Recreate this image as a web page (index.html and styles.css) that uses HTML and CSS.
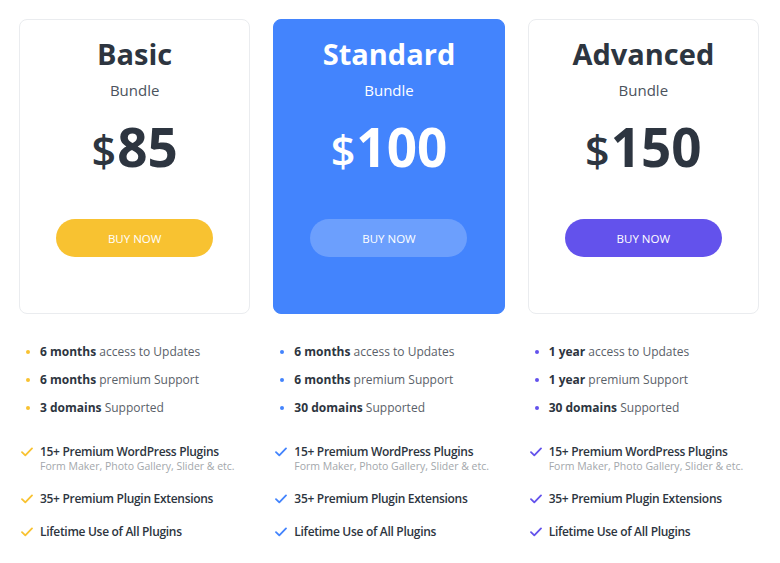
FILE: index.html
```html
<!DOCTYPE html>
<html>
<head>
<meta charset="utf-8">
<link rel="stylesheet" href="styles.css">
</head>
<body>
<div class="plans">
  <div class="plan basic">
    <div class="card">
      <h2 class="title">Basic</h2>
      <div class="sub">Bundle</div>
      <div class="price"><span class="cur">$</span>85</div>
      <a class="btn">BUY NOW</a>
    </div>
    <ul class="bullets">
      <li><b>6 months</b> access to Updates</li>
      <li><b>6 months</b> premium Support</li>
      <li><b>3 domains</b> Supported</li>
    </ul>
    <ul class="checks">
      <li><svg viewBox="0 0 12 10"><path d="M1 5.2 L4.3 8.4 L11 1.4"/></svg><div><div class="ft">15+ Premium WordPress Plugins</div><div class="fs">Form Maker, Photo Gallery, Slider &amp; etc.</div></div></li>
      <li><svg viewBox="0 0 12 10"><path d="M1 5.2 L4.3 8.4 L11 1.4"/></svg><div><div class="ft">35+ Premium Plugin Extensions</div></div></li>
      <li><svg viewBox="0 0 12 10"><path d="M1 5.2 L4.3 8.4 L11 1.4"/></svg><div><div class="ft">Lifetime Use of All Plugins</div></div></li>
    </ul>
  </div>
  <div class="plan standard">
    <div class="card">
      <h2 class="title">Standard</h2>
      <div class="sub">Bundle</div>
      <div class="price"><span class="cur">$</span>100</div>
      <a class="btn">BUY NOW</a>
    </div>
    <ul class="bullets">
      <li><b>6 months</b> access to Updates</li>
      <li><b>6 months</b> premium Support</li>
      <li><b>30 domains</b> Supported</li>
    </ul>
    <ul class="checks">
      <li><svg viewBox="0 0 12 10"><path d="M1 5.2 L4.3 8.4 L11 1.4"/></svg><div><div class="ft">15+ Premium WordPress Plugins</div><div class="fs">Form Maker, Photo Gallery, Slider &amp; etc.</div></div></li>
      <li><svg viewBox="0 0 12 10"><path d="M1 5.2 L4.3 8.4 L11 1.4"/></svg><div><div class="ft">35+ Premium Plugin Extensions</div></div></li>
      <li><svg viewBox="0 0 12 10"><path d="M1 5.2 L4.3 8.4 L11 1.4"/></svg><div><div class="ft">Lifetime Use of All Plugins</div></div></li>
    </ul>
  </div>
  <div class="plan advanced">
    <div class="card">
      <h2 class="title">Advanced</h2>
      <div class="sub">Bundle</div>
      <div class="price"><span class="cur">$</span>150</div>
      <a class="btn">BUY NOW</a>
    </div>
    <ul class="bullets">
      <li><b>1 year</b> access to Updates</li>
      <li><b>1 year</b> premium Support</li>
      <li><b>30 domains</b> Supported</li>
    </ul>
    <ul class="checks">
      <li><svg viewBox="0 0 12 10"><path d="M1 5.2 L4.3 8.4 L11 1.4"/></svg><div><div class="ft">15+ Premium WordPress Plugins</div><div class="fs">Form Maker, Photo Gallery, Slider &amp; etc.</div></div></li>
      <li><svg viewBox="0 0 12 10"><path d="M1 5.2 L4.3 8.4 L11 1.4"/></svg><div><div class="ft">35+ Premium Plugin Extensions</div></div></li>
      <li><svg viewBox="0 0 12 10"><path d="M1 5.2 L4.3 8.4 L11 1.4"/></svg><div><div class="ft">Lifetime Use of All Plugins</div></div></li>
    </ul>
  </div>
</div>
</body>
</html>
```

FILE: styles.css
```css
* { box-sizing: border-box; }
body {
  margin: 0;
  background: #fff;
  font-family: "Open Sans", "Noto Sans", sans-serif;
  color: #2d3540;
}
.plans {
  display: grid;
  grid-template-columns: repeat(3, 1fr);
  column-gap: 23px;
  padding: 19px 21px 0 19px;
}
.card {
  height: 295px;
  border: 1px solid #eaecef;
  border-radius: 8px;
  text-align: center;
  padding-top: 14px;
  display: flex;
  flex-direction: column;
  align-items: center;
}
.title {
  margin: 0;
  font-size: 29px;
  line-height: 40px;
  font-weight: 700;
  color: #2d3540;
}
.sub {
  margin-top: 4px;
  font-size: 15px;
  line-height: 24px;
  color: #4b535d;
}
.price {
  margin-top: 15px;
  font-size: 53px;
  line-height: 60px;
  font-weight: 700;
  color: #2d3540;
}
.cur {
  font-size: 43px;
  font-weight: 600;
  margin-right: 1px;
}
.btn {
  margin-top: 38px;
  width: 157px;
  height: 38px;
  border-radius: 19px;
  display: flex;
  align-items: center;
  justify-content: center;
  color: #fff;
  font-size: 11.5px;
}
.basic .btn { background: #f8c231; }
.advanced .btn { background: #6352ec; }
.standard .card { background: #4384fd; border-color: #4384fd; }
.standard .title, .standard .sub, .standard .price { color: #fff; }
.standard .btn { background: rgba(255,255,255,0.22); }

ul { list-style: none; margin: 0; padding: 0; }
.bullets { margin-top: 24px; }
.bullets li {
  position: relative;
  padding-left: 21px;
  font-size: 12px;
  line-height: 28px;
  color: #5a6169;
}
.bullets li::before {
  content: "";
  position: absolute;
  left: 7px;
  top: 12px;
  width: 4px;
  height: 4px;
  border-radius: 50%;
}
.basic .bullets li::before { background: #f8c231; }
.standard .bullets li::before { background: #4384fd; }
.advanced .bullets li::before { background: #6352ec; }
.bullets b { font-weight: 700; color: #2d3540; }

.checks { margin-top: 22px; display: flex; flex-direction: column; gap: 18px; }
.checks li { display: flex; align-items: flex-start; }
.checks svg {
  flex: none;
  width: 12px;
  height: 10px;
  margin: 3px 7px 0 2px;
  fill: none;
  stroke-width: 1.8;
  stroke-linecap: round;
  stroke-linejoin: round;
}
.basic .checks svg { stroke: #f8c231; }
.standard .checks svg { stroke: #4384fd; }
.advanced .checks svg { stroke: #6352ec; }
.ft { font-size: 12px; line-height: 15px; font-weight: 600; letter-spacing: -0.3px; color: #2d3540; }
.fs { font-size: 10.5px; line-height: 14px; color: #a3a7ab; }
```
